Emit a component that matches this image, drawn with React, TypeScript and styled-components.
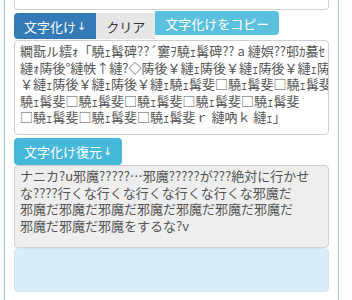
import React from "react";
import styled, { createGlobalStyle } from "styled-components";

const GlobalStyle = createGlobalStyle`
  html, body { margin: 0; padding: 0; background: #ffffff; }
  body { font-family: "Noto Sans CJK JP", "Noto Sans", sans-serif; }
`;

const Page = styled.div`
  padding-left: 4px;
  width: 352px;
  height: 300px;
  overflow: hidden;
  box-sizing: border-box;
`;

const Panel = styled.div`
  width: 335px;
  height: 300px;
  box-sizing: border-box;
  border-left: 1px solid #a9c3df;
  border-right: 1px solid #a9c3df;
  padding: 0 9px;
  display: flex;
  flex-direction: column;
`;

const PrevBox = styled.div`
  height: 10px;
  box-sizing: border-box;
  border: 1px solid #d2d2d2;
  border-top: none;
  border-radius: 0 0 4px 4px;
  width: 315px;
`;

const ButtonRow = styled.div`
  display: flex;
  align-items: flex-start;
  margin-top: 1px;
`;

const Btn = styled.button<{ $bg: string; $fg: string; $h: number; $top: number; $radius: string }>`
  font-family: "Noto Sans CJK JP", sans-serif;
  font-size: 13px;
  line-height: 1;
  height: ${(p) => p.$h}px;
  margin-top: ${(p) => p.$top}px;
  padding: 0 10px;
  border: none;
  border-radius: ${(p) => p.$radius};
  background: ${(p) => p.$bg};
  color: ${(p) => p.$fg};
  display: flex;
  align-items: center;
  align-self: flex-start;
  white-space: nowrap;
`;

const Arrow = styled.span`
  font-family: "DejaVu Sans", sans-serif;
  font-size: 11px;
  margin-left: 1px;
`;

const Area = styled.textarea<{ $h: number; $bg: string; $top: number }>`
  display: block;
  width: 315px;
  height: ${(p) => p.$h}px;
  box-sizing: border-box;
  border: 1px solid #cfcfcf;
  border-radius: 4px;
  background: ${(p) => p.$bg};
  color: #555555;
  font-family: "Noto Sans CJK JP", sans-serif;
  font-size: 13px;
  line-height: 16.6px;
  padding: 2px 5px;
  resize: none;
  overflow: hidden;
  white-space: pre;
  margin: ${(p) => p.$top}px 0 0 0;
`;

const InfoBox = styled.div`
  height: 44px;
  width: 315px;
  box-sizing: border-box;
  background: #d9edf7;
  border: 1px solid #cde6f1;
  border-radius: 4px;
`;

const garbled = [
  "繝翫ル繧ｫ「驍ｪ髯碑??´窶ｦ驍ｪ髯碑?? a 縺娯??邨ｶ蟇ｾ",
  "縺ｫ陦後°縺帙↑縺?◇陦後￥縺ｪ陦後￥縺ｪ陦後￥縺ｪ陦後",
  "￥縺ｪ陦後￥縺ｪ陦後￥縺ｪ驍ｪ髯斐□驍ｪ髯斐□驍ｪ髯斐□",
  "驍ｪ髯斐□驍ｪ髯斐□驍ｪ髯斐□驍ｪ髯斐□驍ｪ髯斐",
  "□驍ｪ髯斐□驍ｪ髯斐□驍ｪ髯斐ｒ 縺吶ｋ 縺ｪ」",
].join("\n");

const restored = [
  "ナニカ?u邪魔?????…邪魔?????が???絶対に行かせ",
  "な????行くな行くな行くな行くな行くな邪魔だ",
  "邪魔だ邪魔だ邪魔だ邪魔だ邪魔だ邪魔だ邪魔だ",
  "邪魔だ邪魔だ邪魔をするな?v",
].join("\n");

export default function App() {
  return (
    <Page>
      <GlobalStyle />
      <Panel>
        <PrevBox />
        <ButtonRow>
          <Btn $bg="#337ab7" $fg="#ffffff" $h={26} $top={2} $radius="4px 0 0 4px">
            文字化け<Arrow>↓</Arrow>
          </Btn>
          <Btn $bg="#e6e6e6" $fg="#333333" $h={26} $top={2} $radius="0">
            クリア
          </Btn>
          <Btn $bg="#5bc0de" $fg="#ffffff" $h={24} $top={0} $radius="0 4px 4px 0">
            文字化けをコピー
          </Btn>
        </ButtonRow>
        <Area readOnly $h={95} $bg="#ffffff" $top={1} value={garbled} />
        <Btn $bg="#46b8da" $fg="#ffffff" $h={27} $top={3} $radius="4px">
          文字化け復元<Arrow>↓</Arrow>
        </Btn>
        <Area readOnly $h={83} $bg="#eeeeee" $top={0} value={restored} />
        <InfoBox />
      </Panel>
    </Page>
  );
}
